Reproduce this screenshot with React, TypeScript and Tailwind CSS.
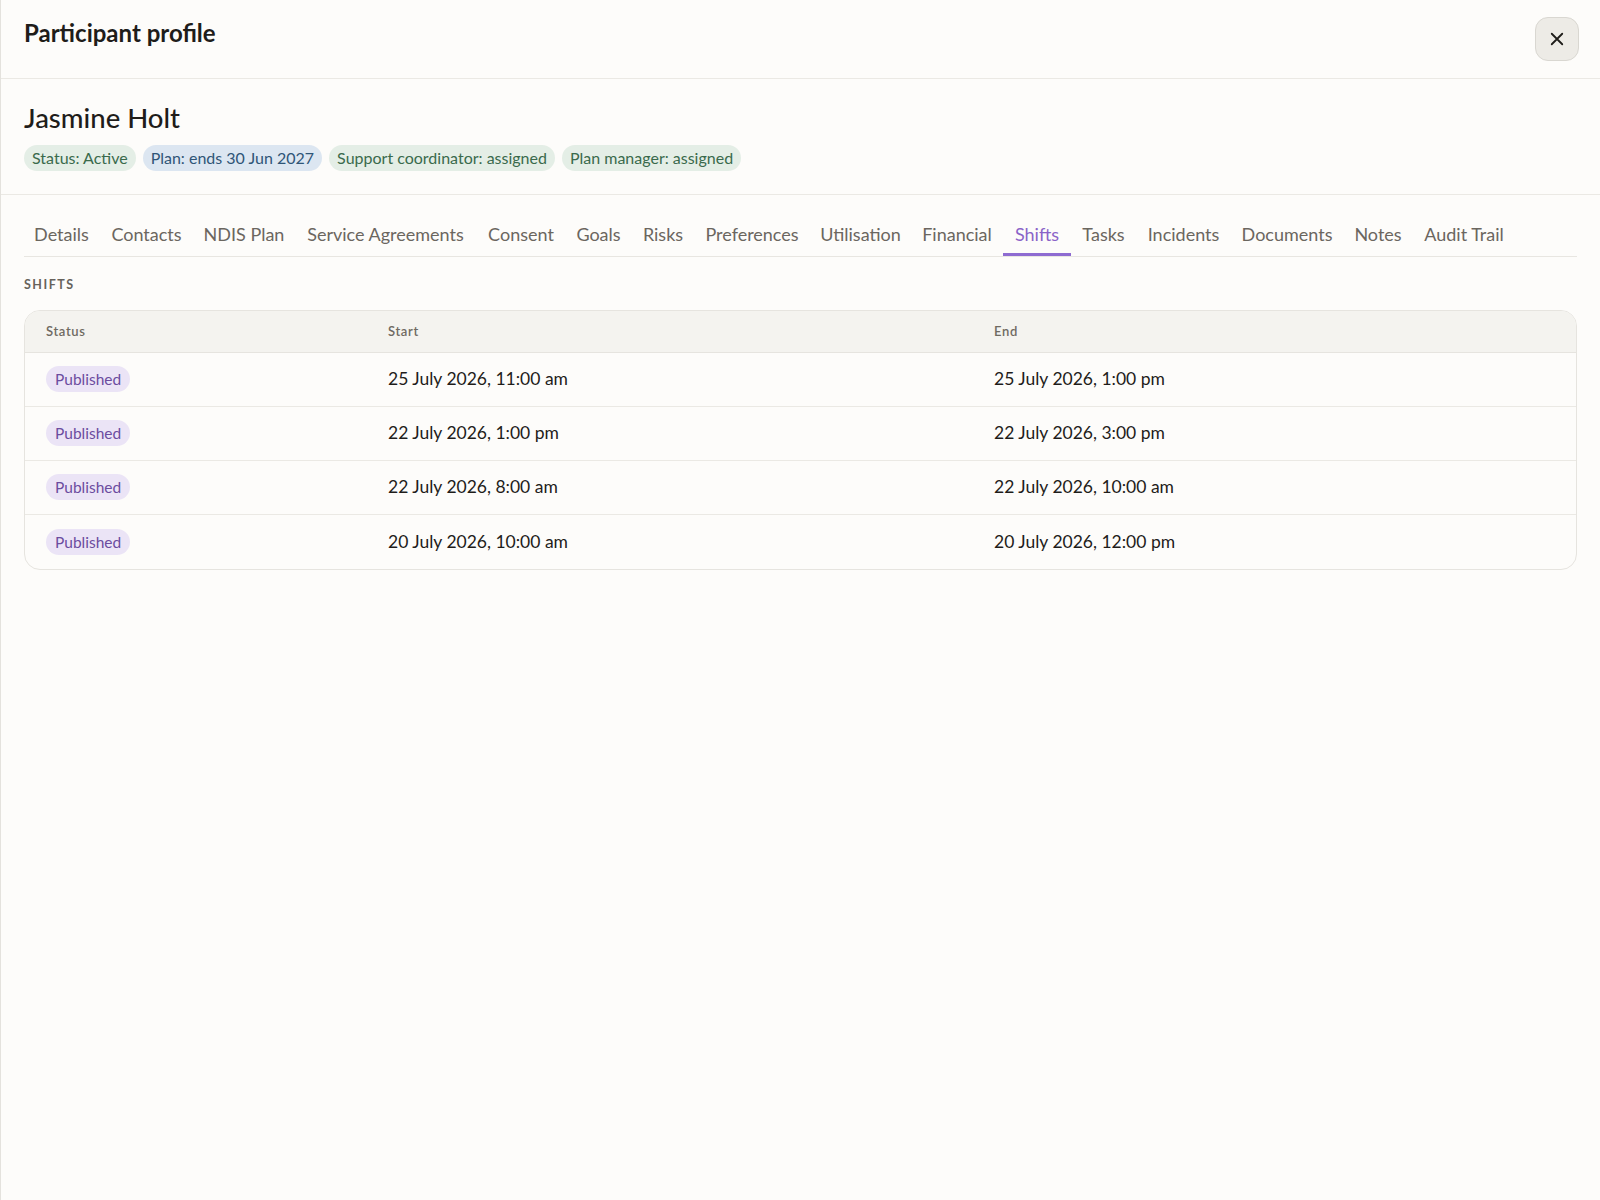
import React from "react";

const tabs: { label: string; w: string }[] = [
  { label: "Details", w: "w-[75px]" },
  { label: "Contacts", w: "w-[95px]" },
  { label: "NDIS Plan", w: "w-[100px]" },
  { label: "Service Agreements", w: "w-[183px]" },
  { label: "Consent", w: "w-[88px]" },
  { label: "Goals", w: "w-[67px]" },
  { label: "Risks", w: "w-[62px]" },
  { label: "Preferences", w: "w-[116px]" },
  { label: "Utilisation", w: "w-[101px]" },
  { label: "Financial", w: "w-[92px]" },
  { label: "Shifts", w: "w-[68px]" },
  { label: "Tasks", w: "w-[65px]" },
  { label: "Incidents", w: "w-[95px]" },
  { label: "Documents", w: "w-[112px]" },
  { label: "Notes", w: "w-[70px]" },
  { label: "Audit Trail", w: "w-[102px]" },
];

const rows = [
  ["25 July 2026, 11:00 am", "25 July 2026, 1:00 pm"],
  ["22 July 2026, 1:00 pm", "22 July 2026, 3:00 pm"],
  ["22 July 2026, 8:00 am", "22 July 2026, 10:00 am"],
  ["20 July 2026, 10:00 am", "20 July 2026, 12:00 pm"],
];

export default function App() {
  return (
    <div
      className="min-h-[1200px] w-full bg-[#fdfcfa] border-l border-[#e4e2dd] text-[#1f1d1a]"
      style={{ fontFamily: "Lato, 'Noto Sans', sans-serif" }}
    >
      {/* Header */}
      <div className="h-[79px] border-b border-[#ebe9e4] flex items-start justify-between pl-[23px] pr-[21px]">
        <h1 className="mt-[18px] text-[24px] leading-[30px] font-bold text-[#1f1d1a]">Participant profile</h1>
        <button className="mt-[17px] w-[44px] h-[44px] rounded-[13px] bg-[#edebe6] border border-[#d9d7d1] flex items-center justify-center">
          <svg width="18" height="18" viewBox="0 0 24 24" fill="none" stroke="#1f1d1a" strokeWidth="2.4" strokeLinecap="round">
            <path d="M5 5l14 14M19 5L5 19" />
          </svg>
        </button>
      </div>

      {/* Identity */}
      <div className="border-b border-[#ebe9e4] px-[23px] pt-[21px] pb-[23px]">
        <div className="text-[27.5px] leading-[36px] font-medium text-[#1f1d1a]">Jasmine Holt</div>
        <div className="mt-[9px] flex gap-[7px]">
          <span className="h-[26px] px-[8px] rounded-full bg-[#e4eee6] text-[#3a6a4c] text-[16px] leading-[26px]">Status: Active</span>
          <span className="h-[26px] px-[8px] rounded-full bg-[#dce6f1] text-[#2f5577] text-[16px] leading-[26px]">Plan: ends 30 Jun 2027</span>
          <span className="h-[26px] px-[8px] rounded-full bg-[#e4eee6] text-[#3a6a4c] text-[16px] leading-[26px]">Support coordinator: assigned</span>
          <span className="h-[26px] px-[8px] rounded-full bg-[#e4eee6] text-[#3a6a4c] text-[16px] leading-[26px]">Plan manager: assigned</span>
        </div>
      </div>

      {/* Tabs */}
      <div className="mx-[23px] mt-[16px] flex border-b border-[#e8e6e1]">
        {tabs.map((t) => {
          const active = t.label === "Shifts";
          return (
            <div
              key={t.label}
              className={`${t.w} relative h-[45px] pt-[2px] flex items-center justify-center text-[18px] whitespace-nowrap ${
                active ? "text-[#8a63c8]" : "text-[#6b665f]"
              }`}
            >
              {t.label}
              {active && <div className="absolute left-0 right-0 bottom-0 h-[3px] bg-[#8e6bd1]" />}
            </div>
          );
        })}
      </div>

      {/* Section */}
      <div className="px-[23px]">
        <div className="mt-[20px] text-[12.5px] leading-[16px] font-bold tracking-[0.12em] text-[#67625b]">SHIFTS</div>
        <div className="mt-[17px] border border-[#e6e4df] rounded-[16px] overflow-hidden bg-[#fdfcfa]">
          <div className="grid grid-cols-[341px_606px_1fr] h-[42px] items-center bg-[#f4f3ef] border-b border-[#e6e4df] text-[13px] font-semibold tracking-[0.05em] text-[#6f6a62]">
            <div className="pl-[21px]">Status</div>
            <div className="pl-[22px]">Start</div>
            <div className="pl-[22px]">End</div>
          </div>
          {rows.map((r, i) => (
            <div
              key={i}
              className={`grid grid-cols-[341px_606px_1fr] h-[54px] items-center text-[17.5px] text-[#1f1d1a] ${
                i < rows.length - 1 ? "border-b border-[#ebe9e4]" : ""
              }`}
            >
              <div className="pl-[21px]">
                <span className="inline-block h-[26px] px-[9px] rounded-full bg-[#ebe4f6] text-[#6b4c9f] text-[15.5px] leading-[26px]">Published</span>
              </div>
              <div className="pl-[22px]">{r[0]}</div>
              <div className="pl-[22px]">{r[1]}</div>
            </div>
          ))}
        </div>
      </div>
    </div>
  );
}
